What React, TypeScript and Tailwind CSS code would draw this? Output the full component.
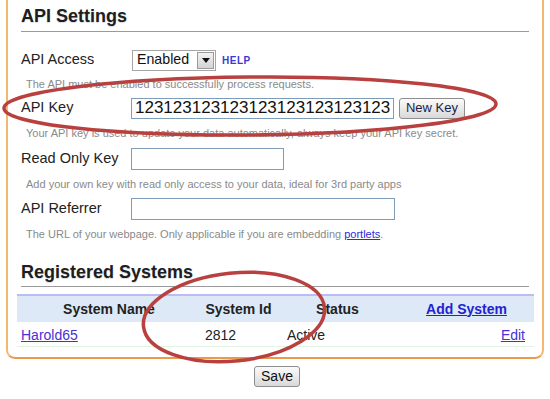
import React from 'react';

const font = { fontFamily: '"Liberation Sans", Arial, sans-serif' };

function FieldRow({ label, children, className = '' }: { label: string; children: React.ReactNode; className?: string }) {
  return (
    <div className={`flex items-center ${className}`}>
      <div className="w-[110px] text-[14.5px] text-[#222]">{label}</div>
      {children}
    </div>
  );
}

function Help({ children, className = '' }: { children: React.ReactNode; className?: string }) {
  return <div className={`flex items-center pl-[5px] text-[11px] text-[#8a8a8a] ${className}`}>{children}</div>;
}

function GrayButton({ children, className = '' }: { children: React.ReactNode; className?: string }) {
  return (
    <button
      type="button"
      className={`flex items-center justify-center rounded-[3px] border border-[#8e8e8e] bg-gradient-to-b from-[#fbfbfb] to-[#d9d9d9] text-[#1c1c4a] ${className}`}
    >
      {children}
    </button>
  );
}

export default function App() {
  return (
    <div className="relative w-[550px] h-[399px] overflow-hidden bg-white" style={font}>
      <div className="ml-[6px] w-[538px] h-[359px] rounded-b-[9px] border-x-[2.5px] border-b-2 border-x-[#f3b76d] border-b-[#e99a4b] pl-[13px] pr-[13px]">
        {/* API settings */}
        <div className="h-[32px] flex items-end border-b border-[#9a9a9a] pb-[6px]">
          <h2 className="text-[18px] font-bold text-[#1e1e1e] leading-none [text-shadow:0_1px_1px_rgba(0,0,0,0.15)]">
            API Settings
          </h2>
        </div>

        <FieldRow label="API Access" className="h-[24px] mt-[16px]">
          <div className="ml-[1px] flex h-[21px] w-[84px] items-center border border-[#a5a5a5] bg-white">
            <span className="flex-1 pl-[4px] text-[14.2px] text-[#111]">Enabled</span>
            <span className="mr-[1px] flex h-[17px] w-[17px] items-center justify-center border border-[#9a9a9a] bg-gradient-to-b from-[#f2f2f2] to-[#d4d4d4]">
              <svg width="8" height="5" viewBox="0 0 8 5"><path d="M0 0h8L4 5z" fill="#111" /></svg>
            </span>
          </div>
          <span className="ml-[6px] text-[10px] font-bold tracking-[0.5px] text-[#3a3ad8]">HELP</span>
        </FieldRow>
        <Help className="h-[24px]">The API must be enabled to successfully process requests.</Help>

        <FieldRow label="API Key" className="h-[24px]">
          <div className="flex h-[21px] w-[263px] items-center overflow-hidden border border-[#7f9db9] bg-white pl-[3px] text-[17px] text-[#111]">
            123123123123123123123123123
          </div>
          <GrayButton className="ml-[5px] h-[21px] w-[66px] text-[13px]">New Key</GrayButton>
        </FieldRow>
        <Help className="h-[26px]">Your API key is used to update your data automatically, always keep your API key secret.</Help>

        <FieldRow label="Read Only Key" className="h-[26px]">
          <div className="h-[22px] w-[153px] border border-[#7f9db9] bg-white" />
        </FieldRow>
        <Help className="h-[24px]">Add your own key with read only access to your data, ideal for 3rd party apps</Help>

        <FieldRow label="API Referrer" className="h-[25px]">
          <div className="h-[22px] w-[264px] border border-[#7f9db9] bg-white" />
        </FieldRow>
        <Help className="h-[26px]">
          The URL of your webpage. Only applicable if you are embedding&nbsp;
          <a className="text-[#2a2ae0] underline">portlets</a>.
        </Help>

        {/* Registered systems */}
        <div className="mt-[16px] h-[24px] flex items-end border-b border-[#9a9a9a] pb-[5px]">
          <h2 className="text-[18px] font-bold text-[#1e1e1e] leading-none [text-shadow:0_1px_1px_rgba(0,0,0,0.15)]">
            Registered Systems
          </h2>
        </div>

        <div className="mt-[7px] -ml-[4px] w-[517px]">
          <div className="grid h-[28px] grid-cols-[184px_75px_123px_135px] items-center border-t-2 border-[#bcbcf2] bg-[#dde9f6] text-[14px] font-bold text-[#222]">
            <div className="text-center">System Name</div>
            <div className="text-center">System Id</div>
            <div className="text-center">Status</div>
            <div className="text-center">
              <a className="text-[#2323d0] underline">Add System</a>
            </div>
          </div>
          <div className="grid h-[25px] grid-cols-[184px_75px_123px_135px] items-center border-b border-[#e3f3e3] pt-[2px] text-[14px] text-[#222]">
            <div className="pl-[4px]">
              <a className="text-[#4b2fd6] underline">Harold65</a>
            </div>
            <div className="pl-[4px]">2812</div>
            <div className="pl-[11px]">Active</div>
            <div className="pr-[9px] text-right">
              <a className="text-[#4b2fd6] underline">Edit</a>
            </div>
          </div>
        </div>
      </div>

      <div className="mt-[7px] flex justify-center pl-[4px]">
        <GrayButton className="h-[21px] w-[46px] text-[14px] text-[#111]">Save</GrayButton>
      </div>

      {/* hand-drawn highlight marks */}
      <svg className="pointer-events-none absolute inset-0" width="550" height="399" viewBox="0 0 550 399">
        <ellipse cx="250" cy="106" rx="246" ry="29" fill="none" stroke="#b8413f" strokeWidth="3.5" transform="rotate(-0.5 250 106)" />
        <ellipse cx="234" cy="317" rx="91" ry="44" fill="none" stroke="#b8413f" strokeWidth="3.5" transform="rotate(-6 234 317)" />
      </svg>
    </div>
  );
}
